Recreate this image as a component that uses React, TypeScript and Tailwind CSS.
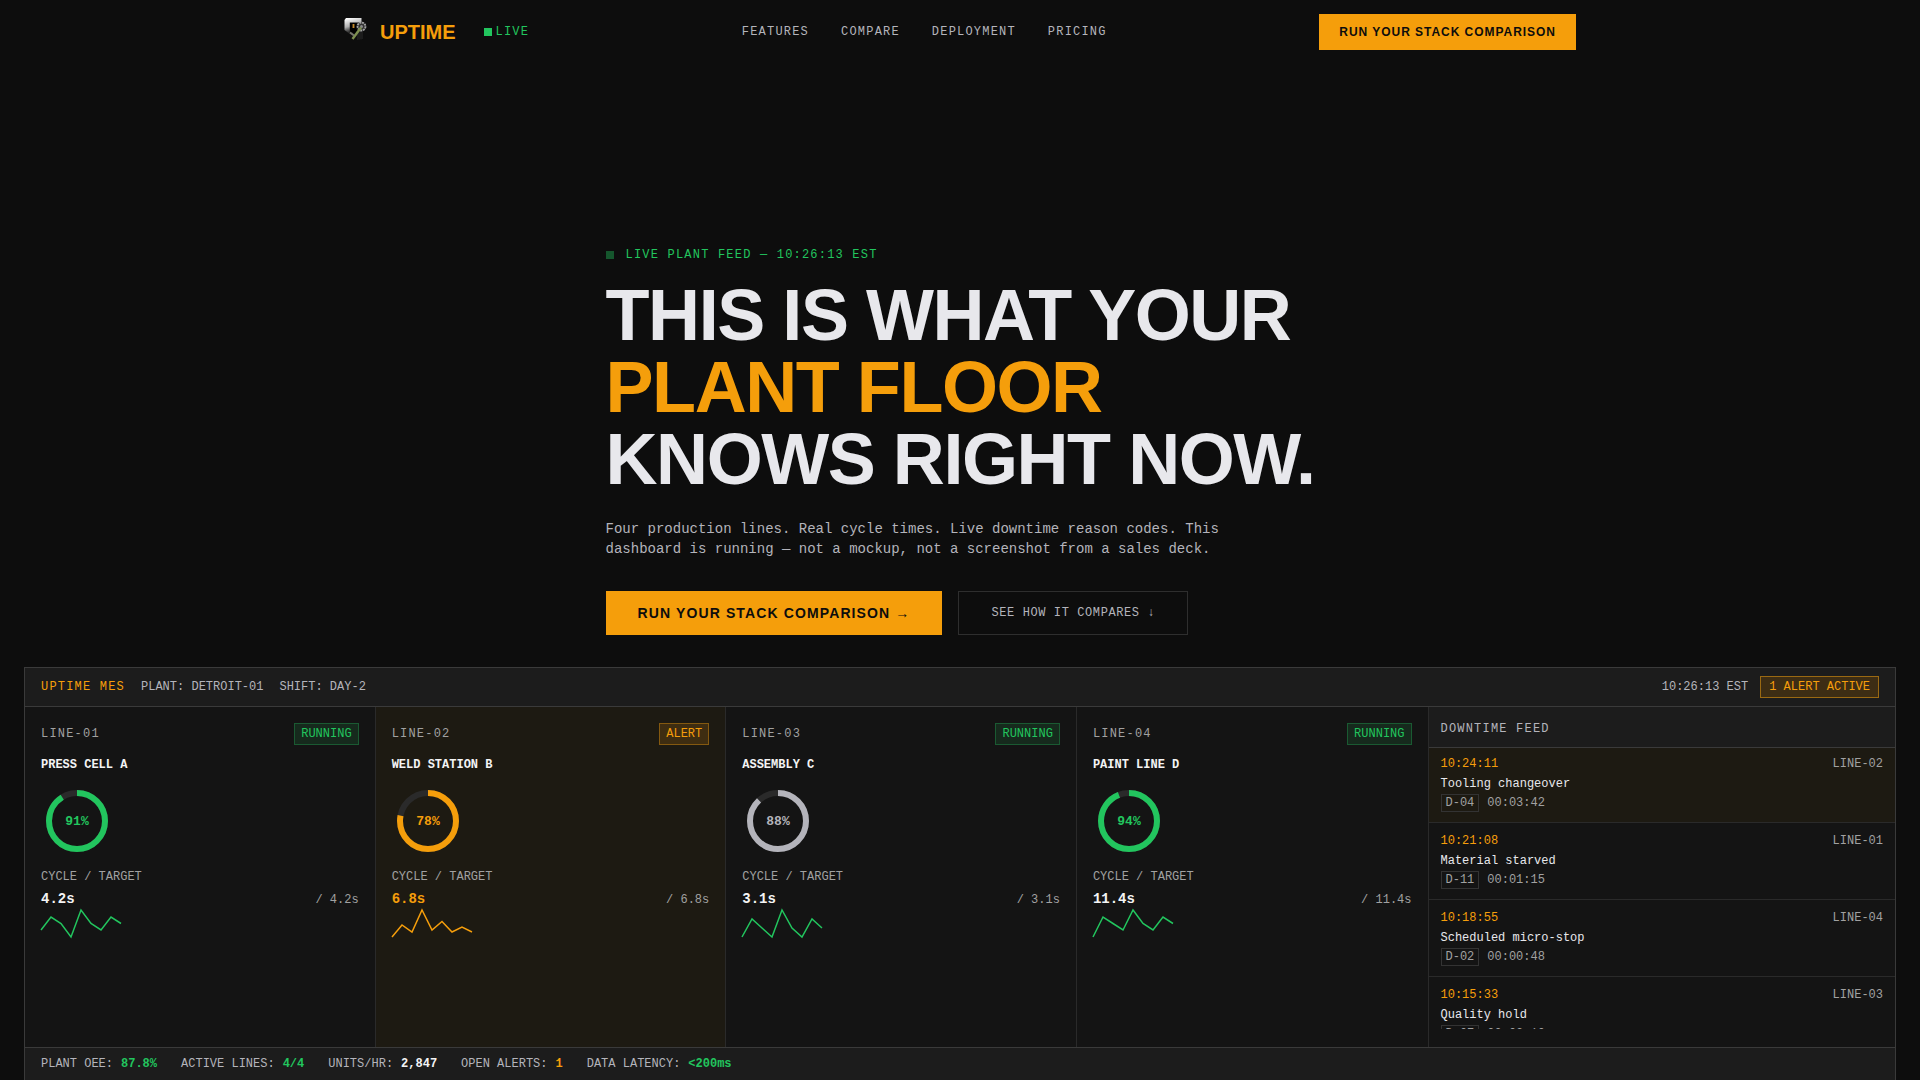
import React from "react";

const mono = "font-['Liberation_Mono',monospace]";

type Tone = "green" | "amber" | "gray";

interface Line {
  id: string;
  name: string;
  oee: number;
  cycle: string;
  target: string;
  alert: boolean;
  ring: Tone;
  points: number[];
}

const lines: Line[] = [
  { id: "LINE-01", name: "PRESS CELL A", oee: 91, cycle: "4.2s", target: "4.2s", alert: false, ring: "green", points: [21, 8, 14.5, 28, 1, 14.5, 21, 8, 14.5] },
  { id: "LINE-02", name: "WELD STATION B", oee: 78, cycle: "6.8s", target: "6.8s", alert: true, ring: "amber", points: [28, 16, 23, 1, 21, 12.5, 23, 18, 23] },
  { id: "LINE-03", name: "ASSEMBLY C", oee: 88, cycle: "3.1s", target: "3.1s", alert: false, ring: "gray", points: [28, 10, 19, 28, 1, 19, 28, 10, 19] },
  { id: "LINE-04", name: "PAINT LINE D", oee: 94, cycle: "11.4s", target: "11.4s", alert: false, ring: "green", points: [28, 8, 14.5, 21, 1, 14.5, 21, 8, 14.5] },
];

const feed = [
  { time: "10:24:11", line: "LINE-02", reason: "Tooling changeover", code: "D-04", duration: "00:03:42", active: true },
  { time: "10:21:08", line: "LINE-01", reason: "Material starved", code: "D-11", duration: "00:01:15", active: false },
  { time: "10:18:55", line: "LINE-04", reason: "Scheduled micro-stop", code: "D-02", duration: "00:00:48", active: false },
  { time: "10:15:33", line: "LINE-03", reason: "Quality hold", code: "D-07", duration: "00:02:10", active: false },
];

const stats = [
  { label: "PLANT OEE:", value: "87.8%", color: "text-[#22c55e]" },
  { label: "ACTIVE LINES:", value: "4/4", color: "text-[#22c55e]" },
  { label: "UNITS/HR:", value: "2,847", color: "text-[#f4f4f5]" },
  { label: "OPEN ALERTS:", value: "1", color: "text-[#f59e0b]" },
  { label: "DATA LATENCY:", value: "<200ms", color: "text-[#22c55e]" },
];

const toneColor: Record<Tone, string> = { green: "#22c55e", amber: "#f59e0b", gray: "#b4b4bb" };

function Logo() {
  return (
    <svg viewBox="0 0 28 28" className="size-7" aria-hidden="true">
      <defs>
        <filter id="soft" x="-20%" y="-20%" width="140%" height="140%">
          <feGaussianBlur stdDeviation="0.5" />
        </filter>
        <linearGradient id="plate" x1="0.2" y1="0" x2="0.5" y2="1">
          <stop offset="0" stopColor="#ffffff" />
          <stop offset="0.5" stopColor="#b0b0b0" />
          <stop offset="1" stopColor="#303030" stopOpacity="0.2" />
        </linearGradient>
      </defs>
      <g filter="url(#soft)">
        <path d="M2 0H17.5V4.5H5.8V16L0.5 12V2Z" fill="url(#plate)" />
        <path d="M6 5H14V13L9 17L6 12Z" fill="#060606" />
        <path d="M13 13L19 12V21L13 22Z" fill="#1c1c1c" />
        <rect x="8.6" y="6" width="1.8" height="4" fill="#c58a2c" />
        <circle cx="17.5" cy="8.5" r="4" fill="#333" stroke="#a3a3a3" strokeWidth="1.8" strokeDasharray="2 0.7" />
        <circle cx="17.5" cy="8.5" r="1.5" fill="#8b8b8b" />
        <path d="M8.5 21L17 9.5" stroke="#7d8f50" strokeWidth="2.4" />
        <path d="M6 14.5L10 17.5" stroke="#77776c" strokeWidth="2" />
      </g>
    </svg>
  );
}

function Nav() {
  return (
    <header className="mx-auto flex h-16 w-full max-w-[1280px] items-center justify-between px-6">
      <div className="flex items-center gap-7">
        <a href="#home" className="flex items-center gap-2 text-xl font-bold text-[#f59e0b]">
          <Logo />
          UPTIME
        </a>
        <span className={`flex items-center gap-1 text-xs tracking-widest text-[#22c55e] ${mono}`}>
          <span className="size-2 bg-[#22c55e]" />
          LIVE
        </span>
      </div>
      <nav className={`flex gap-8 text-xs tracking-widest text-[#b4b4bb] ${mono}`}>
        <a href="#features">FEATURES</a>
        <a href="#compare">COMPARE</a>
        <a href="#deployment">DEPLOYMENT</a>
        <a href="#pricing">PRICING</a>
      </nav>
      <button className="h-9 bg-[#f59e0b] px-5 text-xs font-bold tracking-[0.08em] text-[#0d0d0d]">
        RUN YOUR STACK COMPARISON
      </button>
    </header>
  );
}

function Hero() {
  return (
    <section className="flex justify-center pt-[183px] pb-8">
      <div>
        <p className={`flex items-center gap-3 text-xs tracking-widest text-[#22c55e] ${mono}`}>
          <span className="size-2 bg-[#22c55e] opacity-40" />
          LIVE PLANT FEED — 10:26:13 EST
        </p>
        <h1 className="mt-4 text-7xl leading-none font-bold tracking-[-0.02em] text-[#e8e8ec]">
          THIS IS WHAT YOUR
          <br />
          <span className="text-[#f59e0b]">PLANT FLOOR</span>
          <br />
          KNOWS RIGHT NOW.
        </h1>
        <p className={`mt-6 max-w-[640px] text-sm text-[#b4b4bb] ${mono}`}>
          Four production lines. Real cycle times. Live downtime reason codes. This dashboard is running — not a
          mockup, not a screenshot from a sales deck.
        </p>
        <div className="mt-8 flex gap-4">
          <button className="h-11 bg-[#f59e0b] px-8 text-sm font-bold tracking-[0.08em] text-[#0d0d0d]">
            RUN YOUR STACK COMPARISON →
          </button>
          <a
            href="#compare"
            className={`flex h-11 items-center border border-[#2e2e2e] px-8 text-xs tracking-wider text-[#b4b4bb] ${mono}`}
          >
            SEE HOW IT COMPARES ↓
          </a>
        </div>
      </div>
    </section>
  );
}

function OeeRing({ value, tone }: { value: number; tone: Tone }) {
  const length = 2 * Math.PI * 28;
  return (
    <svg viewBox="0 0 72 72" className="mt-3 size-[72px]" role="img" aria-label={`OEE ${value}%`}>
      <circle cx="36" cy="36" r="28" fill="none" stroke="#2a2a2a" strokeWidth="6" />
      <circle
        cx="36"
        cy="36"
        r="28"
        fill="none"
        stroke={toneColor[tone]}
        strokeWidth="6"
        strokeDasharray={`${(length * value) / 100} ${length}`}
        transform="rotate(-90 36 36)"
      />
      <text x="36" y="40" textAnchor="middle" fontSize="13" fontWeight="700" fill={toneColor[tone]}>
        {value}%
      </text>
    </svg>
  );
}

function LineCard({ line }: { line: Line }) {
  return (
    <article
      className={`border-r border-[#2a2a2a] p-4 last:border-r-0 ${line.alert ? "bg-[#1d1a12]" : "bg-[#141414]"}`}
    >
      <div className="flex items-center justify-between">
        <span className="tracking-widest text-[#a1a1a1]">{line.id}</span>
        <span
          className={
            line.alert
              ? "border border-[#845910] bg-[#3e2d11] px-1.5 py-0.5 text-[#f59e0b]"
              : "border border-[#1a5a32] bg-[#162a1d] px-1.5 py-0.5 text-[#22c55e]"
          }
        >
          {line.alert ? "ALERT" : "RUNNING"}
        </span>
      </div>
      <h2 className="mt-3 font-bold text-[#f4f4f5]">{line.name}</h2>
      <OeeRing value={line.oee} tone={line.ring} />
      <p className="mt-3 text-[#a1a1a1]">CYCLE / TARGET</p>
      <div className="mt-1 flex items-baseline justify-between">
        <span className={`text-sm font-bold ${line.alert ? "text-[#f59e0b]" : "text-[#f4f4f5]"}`}>{line.cycle}</span>
        <span className="text-[#a1a1a1]">/ {line.target}</span>
      </div>
      <svg viewBox="0 0 80 28" className="h-7 w-20 overflow-visible" aria-hidden="true">
        <polyline
          points={line.points.map((y, i) => `${i * 10},${y}`).join(" ")}
          fill="none"
          stroke={line.alert ? "#f59e0b" : "#22c55e"}
          strokeWidth="1.5"
        />
      </svg>
    </article>
  );
}

function DowntimeFeed() {
  return (
    <aside className="border-l border-[#2a2a2a] bg-[#141414]">
      <h2 className="border-b border-[#3a3a3a] bg-[#1c1c1c] px-3 pt-3.5 pb-2.5 tracking-widest text-[#b4b4bb]">
        DOWNTIME FEED
      </h2>
      <div className="h-[281px] overflow-hidden">
        <ul className="-mt-0.5">
          {feed.map((item) => (
            <li
              key={item.time}
              className={`border-b border-[#2a2a2a] px-3 py-2.5 ${item.active ? "bg-[#1d1a12]" : ""}`}
            >
              <div className="flex justify-between">
                <span className="text-[#f59e0b]">{item.time}</span>
                <span className="text-[#a1a1a1]">{item.line}</span>
              </div>
              <p className="mt-1 text-[#e8e8ec]">{item.reason}</p>
              <div className="mt-0.5 flex items-center gap-2 text-[#a1a1a1]">
                <span className="border border-[#333333] px-1">{item.code}</span>
                <span>{item.duration}</span>
              </div>
            </li>
          ))}
        </ul>
      </div>
    </aside>
  );
}

function Dashboard() {
  return (
    <section className={`mx-6 border border-[#3a3a3a] text-xs text-[#b4b4bb] ${mono}`}>
      <header className="flex items-center justify-between border-b border-[#3a3a3a] bg-[#1c1c1c] px-4 py-2">
        <div className="flex gap-4">
          <span className="tracking-widest text-[#f59e0b]">UPTIME MES</span>
          <span>PLANT: DETROIT-01</span>
          <span>SHIFT: DAY-2</span>
        </div>
        <div className="flex items-center gap-3">
          <span>10:26:13 EST</span>
          <span className="border border-[#9a6912] bg-[#3d2d14] px-2 py-0.5 text-[#f59e0b]">1 ALERT ACTIVE</span>
        </div>
      </header>
      <div className="grid min-h-[340px] grid-cols-[3fr_1fr]">
        <div className="grid grid-cols-4">
          {lines.map((line) => (
            <LineCard key={line.id} line={line} />
          ))}
        </div>
        <DowntimeFeed />
      </div>
      <footer className="flex gap-6 border-t border-[#3a3a3a] bg-[#1c1c1c] px-4 py-2">
        {stats.map((stat) => (
          <span key={stat.label} className="flex gap-2">
            {stat.label} <strong className={`font-bold ${stat.color}`}>{stat.value}</strong>
          </span>
        ))}
      </footer>
    </section>
  );
}

export default function App() {
  return (
    <div className="min-h-screen bg-[#0d0d0d] font-['Liberation_Sans',Arial,sans-serif]">
      <Nav />
      <main>
        <Hero />
        <Dashboard />
      </main>
    </div>
  );
}
